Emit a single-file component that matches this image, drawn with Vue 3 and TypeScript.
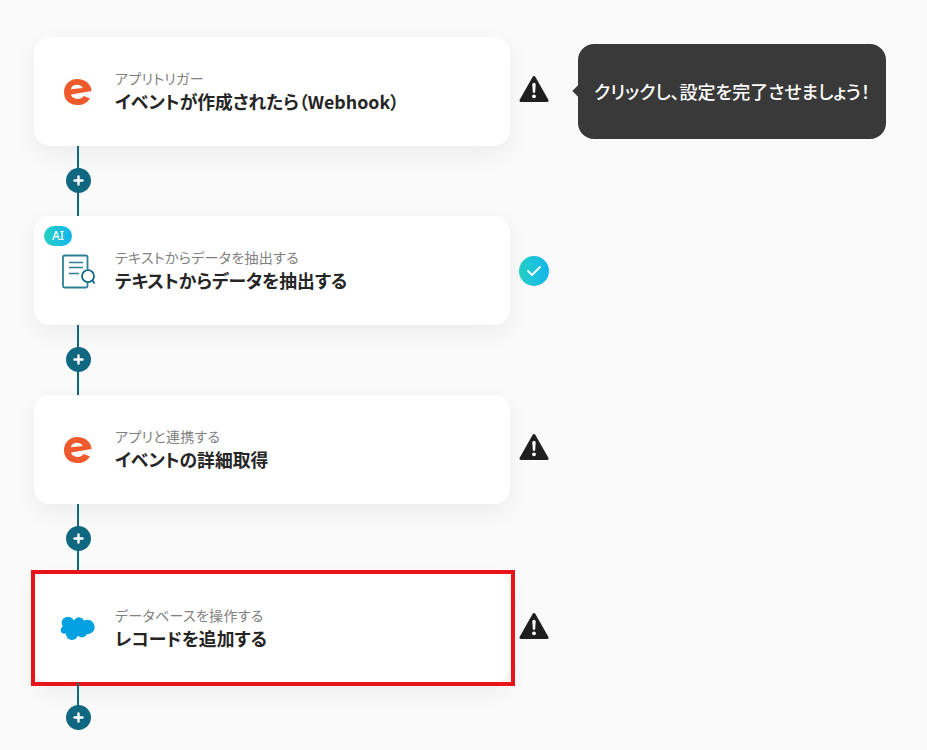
<script setup lang="ts">
interface Step {
  id: number
  label: string
  title: string
  icon: 'eventbrite' | 'doc' | 'salesforce'
  status: 'warn' | 'ok'
  ai?: boolean
  tip?: string
  marked?: boolean
}
const steps: Step[] = [
  { id: 1, label: 'アプリトリガー', title: 'イベントが作成されたら（Webhook）', icon: 'eventbrite', status: 'warn', tip: 'クリックし、設定を完了させましょう！' },
  { id: 2, label: 'テキストからデータを抽出する', title: 'テキストからデータを抽出する', icon: 'doc', status: 'ok', ai: true },
  { id: 3, label: 'アプリと連携する', title: 'イベントの詳細取得', icon: 'eventbrite', status: 'warn' },
  { id: 4, label: 'データベースを操作する', title: 'レコードを追加する', icon: 'salesforce', status: 'warn', marked: true },
]
</script>

<template>
  <main class="page">
    <section v-for="s in steps" :key="s.id" class="step">
      <div class="row">
        <div class="card">
          <span v-if="s.ai" class="ai">AI</span>
          <div class="icon">
            <svg v-if="s.icon === 'eventbrite'" width="30" height="28" viewBox="0 0 30 28">
              <path fill="#ee5a2c" fill-rule="evenodd" d="M14.200 1C6.600 1 1 6.600 1 14.200 1 21.800 6.500 27 14.400 27c5.600 0 9.600-2.200 12.600-6.600l-6.300-2.300c-1.500 1.900-3.500 2.900-6.300 2.900-3.100 0-5.600-1.500-6.400-4.400L28.600 13C28.200 6 22.400 1 14.200 1Zm-6.500 10.200c.9-2.900 3.400-4.400 6.300-4.400 2.800 0 4.900 1.300 5.800 3.300Z" />
            </svg>
            <svg v-else-if="s.icon === 'doc'" width="34" height="36" viewBox="-1 0 34 36" fill="none">
              <path d="M25.500 16.500V4a1.500 1.500 0 0 0-1.500-1.500H2.500A1.500 1.500 0 0 0 1 4v29a1.500 1.500 0 0 0 1.500 1.500H24a1.500 1.500 0 0 0 1.500-1.500v-3.500" stroke="#2f8096" stroke-width="1.800" />
              <path d="M7 9.500h14M7 14.500h14M7 20.500h10" stroke="#2f8096" stroke-width="1.600" />
              <circle cx="26" cy="23.200" r="6" fill="#fff" stroke="#0f6880" stroke-width="1.800" />
              <path d="m30.500 27.500 2 3" stroke="#0f6880" stroke-width="1.800" />
            </svg>
            <svg v-else width="36" height="26" viewBox="0 0 36 26">
              <g fill="#00a1e0">
                <circle cx="8" cy="7" r="6.300" />
                <circle cx="19" cy="6.500" r="5.300" />
                <circle cx="27.500" cy="11" r="7.200" />
                <circle cx="12" cy="18" r="6" />
                <circle cx="4.500" cy="14" r="3.800" />
                <circle cx="22" cy="16.500" r="5" />
                <circle cx="16" cy="12" r="8" />
              </g>
            </svg>
          </div>
          <div class="text">
            <p class="label">{{ s.label }}</p>
            <p class="title">{{ s.title }}</p>
          </div>
          <span v-if="s.marked" class="mark"></span>
        </div>
        <div class="status">
          <svg v-if="s.status === 'warn'" class="warn" width="30" height="28" viewBox="0 0 30 28">
            <path fill="#1f1f1f" stroke="#1f1f1f" stroke-width="3" stroke-linejoin="round" d="M15 2.500 28 25.500H2Z" />
            <path fill="#fff" d="M13.300 9.500a1.700 1.700 0 0 1 3.400 0l-.6 8.300h-2.200Z" />
            <circle cx="15" cy="21.300" r="1.900" fill="#fff" />
          </svg>
          <span v-else class="ok">
            <svg width="16" height="12" viewBox="0 0 16 12" fill="none">
              <path d="m2 6 4 4 8-8" stroke="#fff" stroke-width="1.800" stroke-linecap="round" stroke-linejoin="round" />
            </svg>
          </span>
        </div>
        <div v-if="s.tip" class="tip">{{ s.tip }}</div>
      </div>
      <div class="connector">
        <span class="plus">
          <svg width="11" height="11" viewBox="0 0 11 11">
            <path d="M5.500 1.500v8M1.500 5.500h8" stroke="#fff" stroke-width="2.400" stroke-linecap="round" />
          </svg>
        </span>
      </div>
    </section>
  </main>
</template>

<style>
html, body {
  background: #fafafa;
  overflow: hidden;
}
</style>

<style scoped>
.page {
  height: 750px;
  box-sizing: border-box;
  padding: 37px 0 0 34px;
  overflow: hidden;
  font-family: "Noto Sans CJK JP", "Noto Sans", sans-serif;
  font-feature-settings: "palt";
}
.row {
  display: flex;
  align-items: center;
}
.card {
  position: relative;
  width: 476px;
  height: 109px;
  box-sizing: border-box;
  padding-left: 25px;
  display: flex;
  align-items: center;
  background: #fff;
  border-radius: 16px;
  box-shadow: 0 8px 24px rgba(0, 0, 0, 0.06);
}
.icon {
  width: 38px;
  height: 40px;
  display: flex;
  align-items: center;
  justify-content: center;
  margin-right: 18px;
}
.label {
  margin: 0;
  font-size: 14px;
  letter-spacing: 0.3px;
  line-height: 19px;
  font-weight: 400;
  color: #808080;
}
.title {
  margin: 1px 0 0;
  font-size: 17.800px;
  line-height: 25px;
  font-weight: 700;
  color: #252525;
}
.ai {
  position: absolute;
  left: 10px;
  top: 10px;
  width: 28px;
  height: 20px;
  border-radius: 10px;
  background: linear-gradient(90deg, #26d0c4, #12b5ee);
  color: #fff;
  font-family: "Noto Sans", sans-serif;
  font-size: 12px;
  line-height: 20px;
  font-weight: 500;
  text-align: center;
}
.mark {
  position: absolute;
  left: -3px;
  top: -4px;
  width: 484px;
  height: 116px;
  box-sizing: border-box;
  border: 4px solid #e8141c;
}
.status {
  width: 30px;
  height: 30px;
  margin-left: 9px;
  display: flex;
  align-items: center;
  justify-content: center;
}
.warn {
  transform: translateY(-3px);
}
.ok {
  width: 30px;
  height: 30px;
  border-radius: 50%;
  background: linear-gradient(90deg, #26d0c4, #12b5ee);
  display: flex;
  align-items: center;
  justify-content: center;
}
.tip {
  position: relative;
  margin-left: 29px;
  width: 308px;
  height: 95px;
  border-radius: 16px;
  background: #393939;
  color: #fff;
  font-size: 18px;
  font-weight: 500;
  line-height: 95px;
  text-align: center;
  white-space: nowrap;
}
.tip::before {
  content: "";
  position: absolute;
  left: -4px;
  top: 43px;
  width: 8px;
  height: 8px;
  background: #393939;
  transform: rotate(45deg);
}
.connector {
  position: relative;
  width: 2px;
  height: 70px;
  margin-left: 43px;
  background: #0f6880;
}
.step:last-child .connector {
  height: 35px;
}
.plus {
  position: absolute;
  left: -11.500px;
  top: 22px;
  width: 25px;
  height: 25px;
  border-radius: 50%;
  background: #0f6880;
  display: flex;
  align-items: center;
  justify-content: center;
}
</style>
